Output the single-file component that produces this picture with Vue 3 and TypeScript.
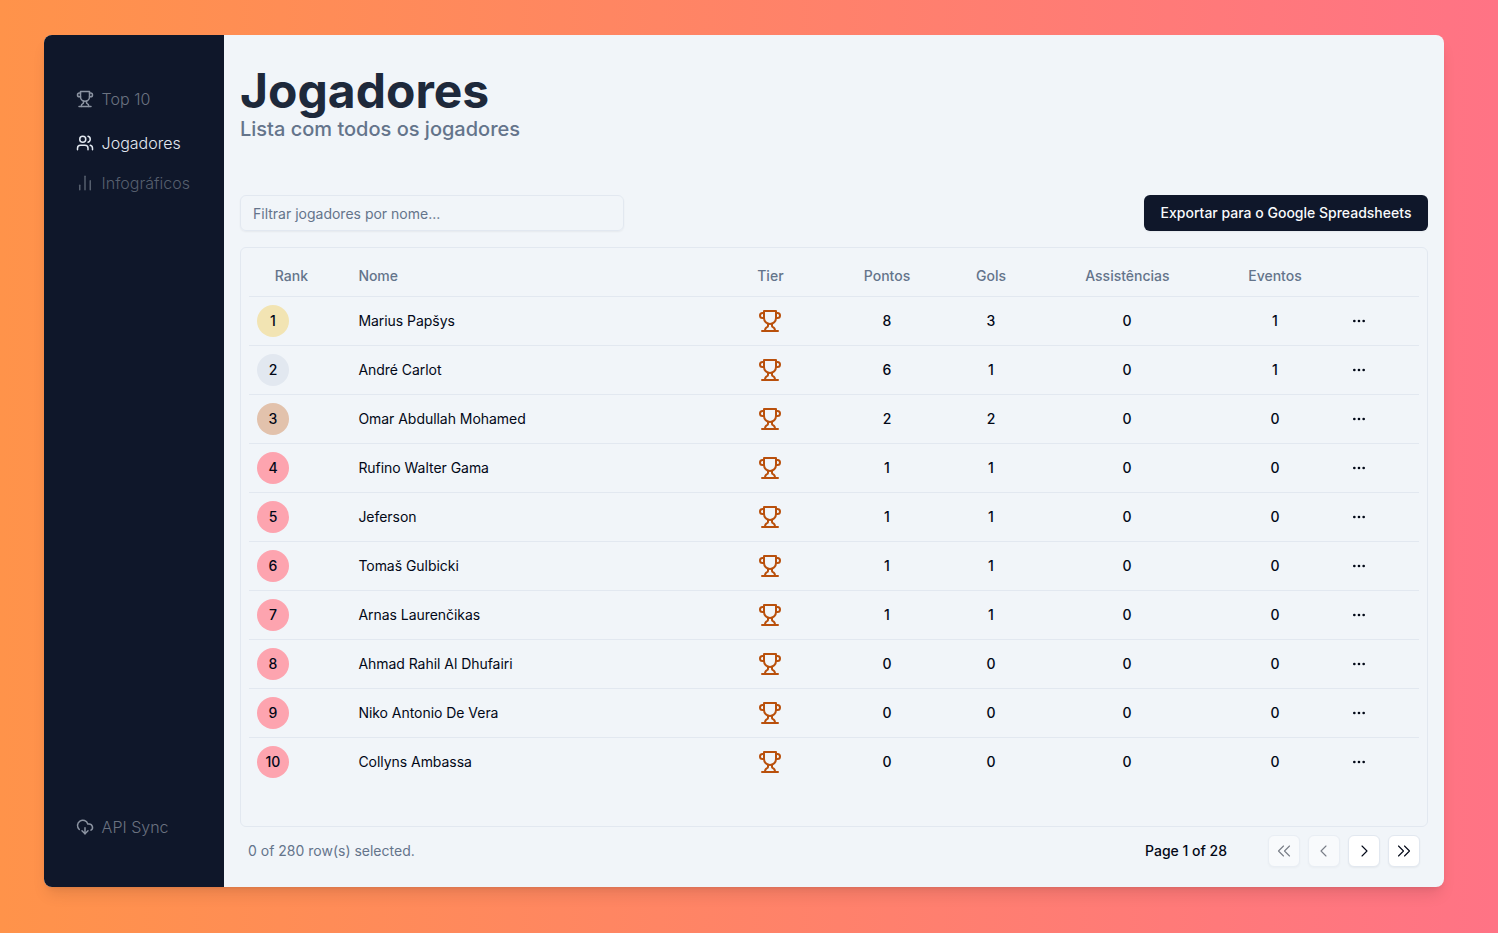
<script setup lang="ts">
interface Player { name: string; pts: number; gols: number; ast: number; ev: number }
const players: Player[] = [
  { name: 'Marius Papšys', pts: 8, gols: 3, ast: 0, ev: 1 },
  { name: 'André Carlot', pts: 6, gols: 1, ast: 0, ev: 1 },
  { name: 'Omar Abdullah Mohamed', pts: 2, gols: 2, ast: 0, ev: 0 },
  { name: 'Rufino Walter Gama', pts: 1, gols: 1, ast: 0, ev: 0 },
  { name: 'Jeferson', pts: 1, gols: 1, ast: 0, ev: 0 },
  { name: 'Tomaš Gulbicki', pts: 1, gols: 1, ast: 0, ev: 0 },
  { name: 'Arnas Laurenčikas', pts: 1, gols: 1, ast: 0, ev: 0 },
  { name: 'Ahmad Rahil Al Dhufairi', pts: 0, gols: 0, ast: 0, ev: 0 },
  { name: 'Niko Antonio De Vera', pts: 0, gols: 0, ast: 0, ev: 0 },
  { name: 'Collyns Ambassa', pts: 0, gols: 0, ast: 0, ev: 0 },
]
function badge(i: number): string {
  return i === 0 ? 'gold' : i === 1 ? 'silver' : i === 2 ? 'bronze' : 'rest'
}
</script>

<template>
  <div class="page">
    <div class="window">
      <aside class="side">
        <nav class="nav">
          <a class="item muted first">
            <svg class="ico" viewBox="0 0 24 24"><path d="M6 9H4.5a2.5 2.5 0 0 1 0-5H6" /><path d="M18 9h1.5a2.5 2.5 0 0 0 0-5H18" /><path d="M4 22h16" /><path d="M10 14.66V17c0 .55-.47.98-.97 1.21C7.85 18.75 7 20.24 7 22" /><path d="M14 14.66V17c0 .55.47.98.97 1.21C16.15 18.75 17 20.24 17 22" /><path d="M18 2H6v7a6 6 0 0 0 12 0V2Z" /></svg>
            <span>Top 10</span>
          </a>
          <a class="item active">
            <svg class="ico" viewBox="0 0 24 24"><path d="M16 21v-2a4 4 0 0 0-4-4H6a4 4 0 0 0-4 4v2" /><circle cx="9" cy="7" r="4" /><path d="M22 21v-2a4 4 0 0 0-3-3.87" /><path d="M16 3.13a4 4 0 0 1 0 7.75" /></svg>
            <span>Jogadores</span>
          </a>
          <a class="item dim">
            <svg class="ico" viewBox="0 0 24 24"><path d="M5 21v-6" /><path d="M12 21V3" /><path d="M19 21V9" /></svg>
            <span>Infográficos</span>
          </a>
        </nav>
        <a class="item muted">
          <svg class="ico" viewBox="0 0 24 24"><path d="M12 13v8l-4-4" /><path d="m12 21 4-4" /><path d="M4.393 15.269A7 7 0 1 1 15.71 8h1.79a4.5 4.5 0 0 1 2.436 8.284" /></svg>
          <span>API Sync</span>
        </a>
      </aside>

      <main class="main">
        <header class="head">
          <h1>Jogadores</h1>
          <p>Lista com todos os jogadores</p>
        </header>

        <div class="tools">
          <input class="filter" type="text" placeholder="Filtrar jogadores por nome..." />
          <button class="export" type="button">Exportar para o Google Spreadsheets</button>
        </div>

        <section class="card">
          <div class="row hrow">
            <div class="c-rank">Rank</div>
            <div class="c-name">Nome</div>
            <div class="c-num nudge">Tier</div>
            <div class="c-num">Pontos</div>
            <div class="c-num">Gols</div>
            <div class="c-num nudge">Assistências</div>
            <div class="c-num">Eventos</div>
            <div></div>
          </div>
          <div v-for="(p, i) in players" :key="p.name" class="row drow">
            <div class="c-badge"><span class="badge" :class="badge(i)">{{ i + 1 }}</span></div>
            <div class="c-name">{{ p.name }}</div>
            <div class="c-icon">
              <svg class="tier" viewBox="0 0 24 24"><path d="M6 9H4.5a2.5 2.5 0 0 1 0-5H6" /><path d="M18 9h1.5a2.5 2.5 0 0 0 0-5H18" /><path d="M4 22h16" /><path d="M10 14.66V17c0 .55-.47.98-.97 1.21C7.85 18.75 7 20.24 7 22" /><path d="M14 14.66V17c0 .55.47.98.97 1.21C16.15 18.75 17 20.24 17 22" /><path d="M18 2H6v7a6 6 0 0 0 12 0V2Z" /></svg>
            </div>
            <div class="c-num val">{{ p.pts }}</div>
            <div class="c-num val">{{ p.gols }}</div>
            <div class="c-num val">{{ p.ast }}</div>
            <div class="c-num val">{{ p.ev }}</div>
            <div class="c-icon">
              <svg class="more" viewBox="0 0 24 24"><circle cx="12" cy="12" r="1" /><circle cx="19" cy="12" r="1" /><circle cx="5" cy="12" r="1" /></svg>
            </div>
          </div>
        </section>

        <footer class="foot">
          <span class="sel">0 of 280 row(s) selected.</span>
          <span class="pageno">Page 1 of 28</span>
          <div class="pager">
            <button class="pg off" type="button" aria-label="Primeira"><svg viewBox="0 0 16 16"><path d="M7.5 3l-5 5 5 5" /><path d="M13.5 3l-5 5 5 5" /></svg></button>
            <button class="pg off" type="button" aria-label="Anterior"><svg viewBox="0 0 16 16"><path d="M10 3L5 8l5 5" /></svg></button>
            <button class="pg" type="button" aria-label="Próxima"><svg viewBox="0 0 16 16"><path d="M6 3l5 5-5 5" /></svg></button>
            <button class="pg" type="button" aria-label="Última"><svg viewBox="0 0 16 16"><path d="M2.5 3l5 5-5 5" /><path d="M8.5 3l5 5-5 5" /></svg></button>
          </div>
        </footer>
      </main>
    </div>
  </div>
</template>

<style>
html, body { margin: 0; padding: 0; }
</style>

<style scoped>
* { box-sizing: border-box; }
.page {
  width: 1498px;
  height: 933px;
  padding: 35px 54px 46px 44px;
  background: linear-gradient(to right, #ff934a, #ff7385);
  font-family: Inter, "Liberation Sans", sans-serif;
  overflow: hidden;
}
.window {
  display: flex;
  height: 852px;
  border-radius: 8px;
  overflow: hidden;
  background: #f1f5f9;
  box-shadow: 0 10px 15px -3px rgba(0,0,0,.1), 0 4px 6px -4px rgba(0,0,0,.1);
}
.side {
  width: 180px;
  flex: none;
  background: #0f172a;
  padding: 44px 0 40px 32px;
  display: flex;
  flex-direction: column;
  justify-content: space-between;
}
.nav { display: flex; flex-direction: column; }
.item {
  display: flex;
  align-items: center;
  gap: 8px;
  height: 40px;
  font-size: 16px;
  font-weight: 300;
}
.item span { margin-left: -0.4px; }
.first { margin-bottom: 4px; }
.ico {
  width: 18px;
  height: 18px;
  fill: none;
  stroke: currentColor;
  stroke-width: 2;
  stroke-linecap: round;
  stroke-linejoin: round;
}
.muted { color: #6b7280; }
.muted .ico { color: #8b93a1; }
.active { color: #e2e8f0; }
.active .ico { color: #e2e8f0; }
.dim { color: #565f6e; }
.dim .ico { color: #565f6e; }

.main { flex: 1; padding: 0 16px; display: flex; flex-direction: column; min-width: 0; }
.head { height: 160px; padding-top: 28px; }
h1 { margin: 0; font-size: 48px; line-height: 56px; font-weight: 700; color: #1e293b; }
.head p { margin: 0; font-size: 20px; line-height: 20px; font-weight: 500; color: #64748b; }
.tools { display: flex; justify-content: space-between; height: 36px; margin-bottom: 16px; }
.filter {
  width: 384px;
  height: 36px;
  padding: 0 12px;
  border: 1px solid #e2e8f0;
  border-radius: 6px;
  background: transparent;
  box-shadow: 0 1px 2px rgba(0,0,0,.05);
  font: 400 14px/20px Inter, sans-serif;
  color: #0f172a;
  outline: none;
}
.filter::placeholder { color: #64748b; opacity: 1; }
.export {
  width: 284px;
  height: 36px;
  padding: 0;
  border: 0;
  border-radius: 6px;
  background: #0f172a;
  color: #f8fafc;
  font: 500 14px/20px Inter, sans-serif;
  box-shadow: 0 1px 2px rgba(0,0,0,.05);
}
.card {
  height: 580px;
  padding: 8px;
  border: 1px solid #e2e8f0;
  border-radius: 6px;
}
.row {
  display: grid;
  grid-template-columns: 101px 378px 84px 150px 58px 214px 82px 86px;
  align-items: center;
  font-size: 14px;
  line-height: 20px;
  color: #020817;
}
.hrow {
  height: 41px;
  border-bottom: 1px solid #e2e8f0;
  color: #64748b;
  font-weight: 500;
}
.nudge { padding-left: 0.8px; }
.drow { height: 49px; border-bottom: 1px solid #e2e8f0; }
.drow:last-child { border-bottom: 0; height: 48px; }
.c-rank { text-align: center; padding-right: 16.2px; }
.c-badge { padding-left: 8px; display: flex; }
.c-name { padding-left: 8.4px; letter-spacing: -0.04px; }
.c-num { text-align: center; }
.c-icon { display: flex; justify-content: center; }
.val { font-weight: 500; }
.badge {
  width: 32px;
  height: 32px;
  border-radius: 50%;
  display: flex;
  align-items: center;
  justify-content: center;
  font-weight: 500;
}
.gold { background: #f2e4b3; }
.silver { background: #e2e8f0; }
.bronze { background: #e2c2ac; }
.rest { background: #fda4af; }
.tier {
  width: 24px;
  height: 24px;
  fill: none;
  stroke: #b9500c;
  stroke-width: 2;
  stroke-linecap: round;
  stroke-linejoin: round;
}
.more {
  width: 16px;
  height: 16px;
  fill: none;
  stroke: #020817;
  stroke-width: 2;
}
.foot { display: flex; align-items: flex-start; height: 60px; padding: 8px 8px 0; font-size: 14px; line-height: 32px; }
.sel { color: #64748b; flex: 1; }
.pageno { color: #020817; font-weight: 500; margin-right: 41px; }
.pager { display: flex; gap: 8px; }
.pg {
  width: 32px;
  height: 32px;
  padding: 0;
  border: 1px solid #e2e8f0;
  border-radius: 6px;
  background: #fff;
  display: flex;
  align-items: center;
  justify-content: center;
  box-shadow: 0 1px 2px rgba(0,0,0,.05);
}
.pg svg {
  width: 16px;
  height: 16px;
  flex: none;
  fill: none;
  stroke: #020817;
  stroke-width: 1.1;
  stroke-linecap: round;
  stroke-linejoin: round;
}
.off { opacity: .5; }
</style>
